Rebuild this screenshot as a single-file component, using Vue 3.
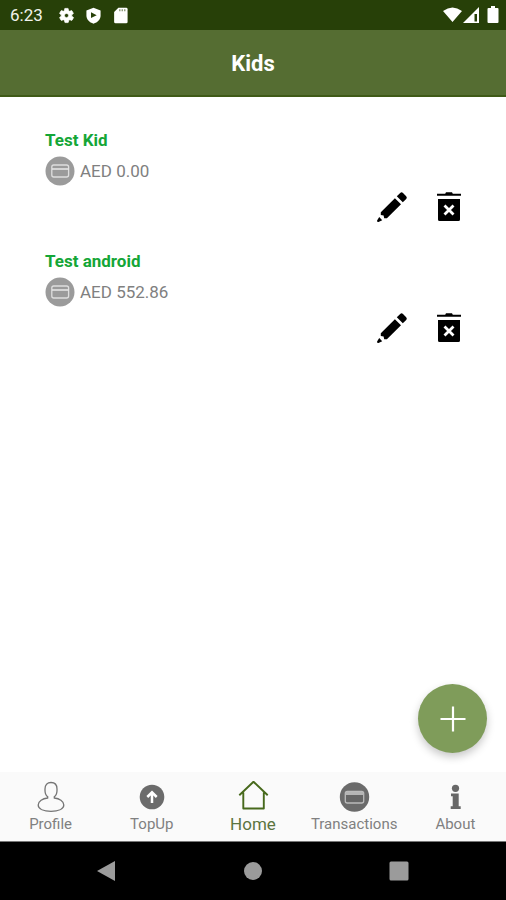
<script setup>
const kids = [
  { name: 'Test Kid', balance: 'AED 0.00' },
  { name: 'Test android', balance: 'AED 552.86' },
]

const tabs = [
  { id: 'profile', label: 'Profile' },
  { id: 'topup', label: 'TopUp' },
  { id: 'home', label: 'Home', active: true },
  { id: 'transactions', label: 'Transactions' },
  { id: 'about', label: 'About' },
]
</script>

<template>
  <div class="screen">
    <div class="status">
      <span class="clock">6:23</span>
      <svg class="status-icon" viewBox="0 0 24 24" aria-hidden="true">
        <path fill="#fff" d="M19.4 13a7.800 7.800 0 0 0 0-2l2.100-1.600a.5.5 0 0 0 .1-.7l-2-3.400a.5.5 0 0 0-.6-.2l-2.500 1a7.300 7.300 0 0 0-1.700-1l-.4-2.600a.5.5 0 0 0-.5-.5h-4a.5.5 0 0 0-.5.4L9.200 5.100a7.700 7.700 0 0 0-1.700 1l-2.500-1a.5.5 0 0 0-.6.2l-2 3.400a.5.5 0 0 0 .1.700L4.600 11a8 8 0 0 0 0 2l-2.100 1.600a.5.5 0 0 0-.1.700l2 3.400c.1.200.4.300.6.200l2.500-1a7.300 7.300 0 0 0 1.700 1l.4 2.600c0 .3.200.5.500.5h4c.2 0 .4-.2.500-.4l.4-2.700a7.700 7.700 0 0 0 1.700-1l2.500 1c.2.100.5 0 .6-.2l2-3.400a.5.5 0 0 0-.1-.7zM12 15a3 3 0 1 1 0-6 3 3 0 0 1 0 6z" stroke="#fff" />
      </svg>
      <svg class="status-icon" viewBox="0 0 24 24" aria-hidden="true">
        <path fill="#fff" d="M12 1 2 5v7c0 5.500 4 9.700 10 11.500C18 21.700 22 17.500 22 12V5z" />
        <path fill="#274008" d="M8.500 7.500v8l8-4z" />
      </svg>
      <svg class="status-icon" viewBox="0 0 24 24" aria-hidden="true">
        <path fill="#fff" d="M9 1h11q2 0 2 2v18q0 2-2 2H5q-2 0-2-2V7z" />
        <path stroke="#8b9a79" stroke-width="2" d="M11 3v3M14.500 3v3M18 3v3" />
      </svg>
      <svg class="signals" viewBox="0 0 56 18" aria-hidden="true">
        <path fill="#fff" d="M0 5Q9.500-2 19 5L9.500 16zM20 17 36 1v16z" />
        <path fill="#274008" d="M31.500 8H34v7.500h-2.500z" />
        <path fill="#fff" d="M44.500 3q0-1 1-1H48V0h4v2h2.500q1 0 1 1v13q0 1-1 1h-9q-1 0-1-1z" />
      </svg>
    </div>

    <header class="header">
      <h1>Kids</h1>
    </header>

    <main class="content">
      <ul class="kids">
        <li v-for="kid in kids" :key="kid.name" class="kid">
          <h2>{{ kid.name }}</h2>
          <div class="balance">
            <svg class="card-icon" viewBox="0 0 30 30" aria-hidden="true">
              <circle cx="15" cy="15" r="14.500" fill="#9b9b9b" />
              <rect x="6.800" y="9" width="16.800" height="12" rx="2" fill="#9b9b9b" stroke="#dedede" stroke-width="1.300" />
              <path d="M7 13h16.500" stroke="#e8e8e8" stroke-width="1.500" />
            </svg>
            <span>{{ kid.balance }}</span>
          </div>
          <div class="actions">
            <button type="button" :aria-label="`Edit ${kid.name}`">
              <svg viewBox="0 0 32 32" aria-hidden="true">
                <path d="M4.800 21.200 18.900 7.200 25 13.200 10.900 27.300H8.200L7.600 24.500 4.800 24zM20.800 5.300 24.200 2q1.400-1.300 2.800 0l3.200 3.200q1.300 1.400 0 2.800l-3.400 3.300zM3.200 26l3 3.200-3.700 1.700q-1.900.3-1.400-1.400z" />
              </svg>
            </button>
            <button type="button" :aria-label="`Delete ${kid.name}`">
              <svg viewBox="0 0 32 32" aria-hidden="true">
                <path d="M4 2.800h8.200l.8-1.600h6l.8 1.600H28v2H4zM5 8h22v20.500q0 1.500-1.500 1.500h-19Q5 30 5 28.500z" />
                <path d="m11.500 14.500 9 9m0-9-9 9" stroke="#fff" stroke-width="2.800" />
              </svg>
            </button>
          </div>
        </li>
      </ul>
      <button type="button" class="fab" aria-label="Add kid">
        <svg viewBox="0 0 26 26" aria-hidden="true">
          <path d="M13 .5v25M.5 13h25" stroke="#fff" stroke-width="2.200" />
        </svg>
      </button>
    </main>

    <nav class="tabs">
      <a v-for="tab in tabs" :key="tab.id" :href="`#${tab.id}`" class="tab" :class="{ active: tab.active }">
        <svg viewBox="0 0 32 32" aria-hidden="true">
          <g v-if="tab.id === 'profile'" fill="none" stroke="#747474" stroke-width="1.300">
            <path d="M12.700 15.700C9.500 13.500 10 10.500 10 8c0-4 2.300-6.500 6-6.500S22 4 22 8c0 2.500.5 5.500-2.700 7.700v1.300c5 .5 9.500 3 9.500 7 0 4.300-6 6.300-12.800 6.300S3.200 28.300 3.200 24c0-4 4.500-6.500 9.500-7z" />
          </g>
          <g v-else-if="tab.id === 'topup'">
            <circle cx="16" cy="16" r="12.300" fill="#6b6b6b" />
            <path d="M16 22v-10.500M11.300 16l4.700-4.700 4.700 4.700" fill="none" stroke="#fff" stroke-width="2.500" />
          </g>
          <g v-else-if="tab.id === 'home'" fill="none" stroke="#47691c" stroke-width="1.900" stroke-linejoin="round">
            <path d="M6.300 11.500v16h20.500v-16M2.300 14.300 16.500.8l14.200 13.500" />
          </g>
          <g v-else-if="tab.id === 'transactions'">
            <circle cx="16.500" cy="16" r="14.700" fill="#6b6b6b" />
            <rect x="7.300" y="10.500" width="18.400" height="11.500" rx="2" fill="#666" stroke="#bbb" stroke-width="1.300" />
            <path d="M8 12.500h17" stroke="#b5b5b5" stroke-width="3" />
          </g>
          <g v-else fill="#686868">
            <circle cx="16.500" cy="7.300" r="3.600" />
            <path d="M12 12.500h7.700v12.700h2V28h-10v-2.800h2v-10H12z" />
          </g>
        </svg>
        <span>{{ tab.label }}</span>
      </a>
    </nav>

    <div class="system-nav">
      <button type="button" aria-label="Back">
        <svg viewBox="0 0 24 24" aria-hidden="true"><path fill="#9b9b9b" d="M2 12 20 2v20z" /></svg>
      </button>
      <button type="button" aria-label="Home screen">
        <svg viewBox="0 0 24 24" aria-hidden="true"><circle cx="12" cy="12" r="9" fill="#9b9b9b" /></svg>
      </button>
      <button type="button" aria-label="Recent apps">
        <svg viewBox="0 0 24 24" aria-hidden="true"><rect x="2.500" y="2.500" width="19" height="19" rx="1.500" fill="#9b9b9b" /></svg>
      </button>
    </div>
  </div>
</template>

<style>
body {
  margin: 0;
  background: #fff;
}
</style>

<style scoped>
.screen {
  display: flex;
  flex-direction: column;
  min-height: 100vh;
  font-family: Roboto, 'Liberation Sans', sans-serif;
  color: #808080;
}

button {
  display: flex;
  align-items: center;
  justify-content: center;
  margin: 0;
  padding: 0;
  border: 0;
  background: none;
  cursor: pointer;
}

.status {
  display: flex;
  align-items: center;
  gap: 10px;
  height: 30px;
  padding: 0 7px 0 10px;
  background: #274008;
}

.clock {
  margin-right: 5px;
  font-size: 17px;
  line-height: 20px;
  color: #f0f3ec;
}

.status-icon {
  width: 17px;
  height: 17px;
}

.signals {
  width: 56px;
  height: 18px;
  margin-left: auto;
}

.header {
  display: flex;
  align-items: center;
  justify-content: center;
  box-sizing: border-box;
  height: 67px;
  padding-top: 2px;
  border-bottom: 2px solid #3f5a17;
  background: #556d32;
}

h1 {
  margin: 0;
  font-size: 22px;
  font-weight: 700;
  line-height: 28px;
  color: #fff;
}

.content {
  position: relative;
  flex: 1;
  padding: 33px 41px 88px 45px;
}

.kids {
  display: flex;
  flex-direction: column;
  gap: 28px;
  margin: 0;
  padding: 0;
  list-style: none;
}

h2 {
  margin: 0 0 6px;
  font-size: 17px;
  font-weight: 700;
  line-height: 20px;
  color: #14a637;
}

.balance {
  display: flex;
  align-items: center;
  gap: 5px;
  font-size: 17px;
  line-height: 20px;
}

.card-icon {
  width: 30px;
  height: 30px;
}

.actions {
  display: flex;
  justify-content: flex-end;
  gap: 25px;
  margin-top: 5px;
}

.actions svg {
  display: block;
  width: 32px;
  height: 32px;
}

.fab {
  position: absolute;
  right: 19px;
  bottom: 19px;
  width: 69px;
  height: 69px;
  border-radius: 50%;
  background: #7f9c5a;
  box-shadow: 0 4px 8px rgba(0, 0, 0, 0.22);
}

.fab svg {
  width: 26px;
  height: 26px;
}

.tabs {
  display: grid;
  grid-template-columns: repeat(5, 1fr);
  height: 69px;
  border-bottom: 1px solid #777;
  background: #fafafa;
}

.tab {
  display: flex;
  flex-direction: column;
  align-items: center;
  gap: 2px;
  padding-top: 9px;
  font-size: 15px;
  line-height: 18px;
  color: #808080;
  text-decoration: none;
}

.tab svg {
  width: 32px;
  height: 32px;
}

.tab.active {
  font-size: 17px;
  color: #5c7440;
}

.system-nav {
  display: grid;
  grid-template-columns: repeat(3, 1fr);
  height: 58px;
  padding: 0 34px;
  background: #000;
}

.system-nav svg {
  width: 24px;
  height: 24px;
}
</style>
